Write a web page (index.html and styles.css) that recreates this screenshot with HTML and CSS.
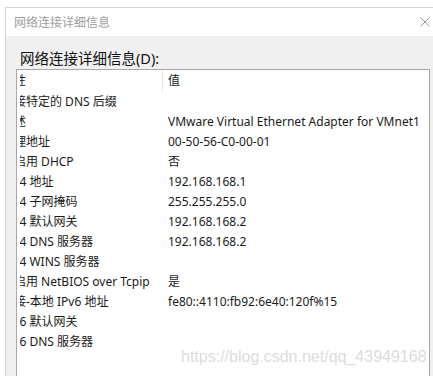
FILE: index.html
```html
<!DOCTYPE html>
<html>
<head>
<meta charset="utf-8"/>
<link rel="stylesheet" href="styles.css">
<title>网络连接详细信息</title>
</head>
<body>

<div class="dlg">
<div class="ttl">
<span>网络连接详细信息</span>
<svg class="cls" width="10" height="10" viewBox="0 0 10 10"><path d="M0.5 0.5L9.5 9.5M9.5 0.5L0.5 9.5" stroke="#9a9a9a" stroke-width="1" fill="none"/></svg>
</div>

<div class="bd">
<div class="lbl">网络连接详细信息(<u>D</u>):</div>
<div class="lst">
<div class="row hd"><div class="c1"><span>属性</span></div><div class="c2">值</div></div>
<div class="row"><div class="c1"><span>连接特定的 DNS 后缀</span></div><div class="c2"></div></div>
<div class="row"><div class="c1"><span>描述</span></div><div class="c2">VMware Virtual Ethernet Adapter for VMnet1</div></div>
<div class="row"><div class="c1"><span>物理地址</span></div><div class="c2">00-50-56-C0-00-01</div></div>
<div class="row"><div class="c1"><span>已启用 DHCP</span></div><div class="c2">否</div></div>
<div class="row"><div class="c1"><span>IPv4 地址</span></div><div class="c2">192.168.168.1</div></div>
<div class="row"><div class="c1"><span>IPv4 子网掩码</span></div><div class="c2">255.255.255.0</div></div>
<div class="row"><div class="c1"><span>IPv4 默认网关</span></div><div class="c2">192.168.168.2</div></div>
<div class="row"><div class="c1"><span>IPv4 DNS 服务器</span></div><div class="c2">192.168.168.2</div></div>
<div class="row"><div class="c1"><span>IPv4 WINS 服务器</span></div><div class="c2"></div></div>
<div class="row"><div class="c1"><span>已启用 NetBIOS over Tcpip</span></div><div class="c2">是</div></div>
<div class="row"><div class="c1"><span>连接-本地 IPv6 地址</span></div><div class="c2">fe80::4110:fb92:6e40:120f%15</div></div>
<div class="row"><div class="c1"><span>IPv6 默认网关</span></div><div class="c2"></div></div>
<div class="row"><div class="c1"><span>IPv6 DNS 服务器</span></div><div class="c2"></div></div>
</div>
</div>
</div>

<div class="wm">https://blog.csdn.net/qq_43949168</div>

</body>
</html>
```

FILE: styles.css
```css
html,body{margin:0;padding:0;}
body{height:376px;overflow:hidden;background:#fff;position:relative;
font-family:"Noto Sans","Noto Sans CJK SC",sans-serif;font-size:12px;color:#1a1a1a;}

/** dialog **/
.dlg{margin:7px 0 0 5px;height:369px;border-top:1px solid #d4d4d4;border-left:1px solid #d4d4d4;
display:flex;flex-direction:column;}
.ttl{height:28px;flex:none;display:flex;align-items:center;justify-content:space-between;
padding:0 3px 0 8px;background:#fff;color:#9d9d9d;}
.cls{display:block;}

.bd{flex:1;display:flex;flex-direction:column;background:#f0f0f0;padding:12px 3px 0 10px;min-height:0;}
.lbl{height:20px;line-height:20px;padding-left:4px;margin-bottom:1px;font-size:14.5px;color:#111;}
.lbl u{text-decoration:none;}

/** list: first column scrolled sideways **/
.lst{flex:1;background:#fff;border:1px solid #a8a8a8;border-bottom:0;overflow:hidden;}
.row{display:flex;height:20px;line-height:20px;white-space:nowrap;}
.row.hd{height:22px;line-height:22px;}
.c1{width:142px;margin-left:3px;flex:none;overflow:hidden;}
.c1 span{display:block;margin-left:-18px;}
.hd .c1{border-right:1px solid #e6e6e6;}
.c2{padding-left:5px;overflow:hidden;}
.row:not(.hd) .c1{margin-right:1px;}

/** watermark **/
.wm{position:absolute;left:181px;top:346px;font-family:"Liberation Sans",Arial,sans-serif;
font-size:16px;line-height:22px;color:#dcdcdc;white-space:nowrap;}
```
